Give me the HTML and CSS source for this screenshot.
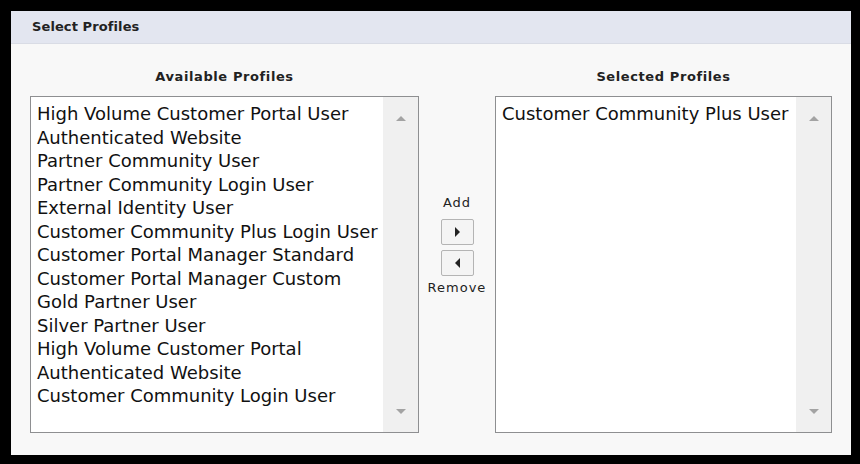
FILE: index.html
```html
<!DOCTYPE html>
<html lang="en">
<head>
  <meta charset="UTF-8">
  <title>Select Profiles</title>
  <link rel="stylesheet" href="styles.css">
</head>
<body>
  <div class="panel">
    <div class="panel-header">Select Profiles</div>
    <div class="picker">
      <div class="column column-available">
        <div class="column-title">Available Profiles</div>
        <div class="listbox">
          <ul class="options">
            <li>High Volume Customer Portal User</li>
            <li>Authenticated Website</li>
            <li>Partner Community User</li>
            <li>Partner Community Login User</li>
            <li>External Identity User</li>
            <li>Customer Community Plus Login User</li>
            <li>Customer Portal Manager Standard</li>
            <li>Customer Portal Manager Custom</li>
            <li>Gold Partner User</li>
            <li>Silver Partner User</li>
            <li>High Volume Customer Portal</li>
            <li>Authenticated Website</li>
            <li>Customer Community Login User</li>
          </ul>
          <div class="scrollbar"><span class="arrow-up"></span><span class="arrow-down"></span></div>
        </div>
      </div>

      <div class="controls">
        <span class="control-label">Add</span>
        <button type="button" class="move-btn move-add"><span class="tri-right"></span></button>
        <button type="button" class="move-btn move-remove"><span class="tri-left"></span></button>
        <span class="control-label">Remove</span>
      </div>

      <div class="column column-selected">
        <div class="column-title">Selected Profiles</div>
        <div class="listbox">
          <ul class="options">
            <li>Customer Community Plus User</li>
          </ul>
          <div class="scrollbar"><span class="arrow-up"></span><span class="arrow-down"></span></div>
        </div>
      </div>
    </div>
  </div>
</body>
</html>
```

FILE: styles.css
```css
body {
  margin: 0;
  background: #000;
  font-family: "DejaVu Sans", Verdana, sans-serif;
}
.panel {
  margin: 11px 9px 0 11px;
  width: 840px;
  height: 444px;
  background: #f8f8f8;
}
.panel-header {
  height: 32px;
  line-height: 32px;
  padding-left: 21px;
  background: #e3e6f0;
  border-bottom: 1px solid #d9dce5;
  font-size: 13px;
  font-weight: bold;
  letter-spacing: 0.1px;
  color: #222;
}
.picker {
  display: flex;
  padding: 20px 19px 0 19px;
}
.column {
  display: flex;
  flex-direction: column;
}
.column-available {
  width: 389px;
}
.column-selected {
  width: 337px;
}
.column-title {
  text-align: center;
  font-size: 13px;
  font-weight: bold;
  letter-spacing: 0.6px;
  color: #222;
  height: 32px;
  line-height: 26px;
}
.listbox {
  display: flex;
  height: 335px;
  border: 1px solid #8e8f91;
  background: #fff;
}
.options {
  flex: 1;
  list-style: none;
  margin: 0;
  padding: 5px 0 0 6px;
  font-size: 18px;
  line-height: 23.5px;
  color: #111;
}
.scrollbar {
  width: 35px;
  background: #f0f0f0;
  display: flex;
  flex-direction: column;
  justify-content: space-between;
  align-items: center;
  padding: 19px 0 18px;
}
.arrow-up {
  border-left: 5px solid transparent;
  border-right: 5px solid transparent;
  border-bottom: 5px solid #a3a3a3;
}
.arrow-down {
  border-left: 5px solid transparent;
  border-right: 5px solid transparent;
  border-top: 5px solid #a3a3a3;
}
.controls {
  width: 76px;
  display: flex;
  flex-direction: column;
  align-items: center;
  padding-top: 131px;
}
.control-label {
  font-size: 13px;
  letter-spacing: 1px;
  color: #222;
  line-height: 16px;
}
.move-btn {
  width: 33px;
  height: 26px;
  padding: 0;
  border: 1px solid #b4b4b4;
  border-radius: 2px;
  background: #f4f4f4;
  display: flex;
  align-items: center;
  justify-content: center;
}
.move-add {
  margin: 8px 0 5px;
}
.move-remove {
  margin-bottom: 4px;
}
.tri-right {
  border-top: 5px solid transparent;
  border-bottom: 5px solid transparent;
  border-left: 5px solid #222;
}
.tri-left {
  border-top: 5px solid transparent;
  border-bottom: 5px solid transparent;
  border-right: 5px solid #222;
}
```
